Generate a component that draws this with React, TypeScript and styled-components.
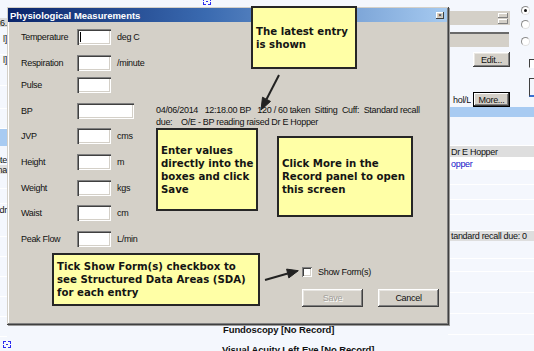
import React from "react";
import styled, { createGlobalStyle } from "styled-components";

const GlobalStyle = createGlobalStyle`
  html, body {
    margin: 0;
    padding: 0;
  }
  body {
    width: 534px;
    height: 351px;
    overflow: hidden;
    background: #f4f7fd;
    font-family: "Liberation Sans", Arial, sans-serif;
  }
`;

const ui = `
  font-family: "Liberation Sans", Arial, sans-serif;
  font-size: 9px;
  letter-spacing: -0.3px;
  color: #111;
`;

const Desktop = styled.div`
  position: relative;
  width: 534px;
  height: 351px;
  overflow: hidden;
  background: #f4f7fd;
`;

/* ---------- the application behind the dialog ---------- */

const Backdrop = styled.div`
  display: grid;
  grid-template-columns: 7px 441px 86px;
  height: 351px;
  ${ui}
`;

const Strip = styled.div`
  display: flex;
  flex-direction: column;
  overflow: hidden;
`;

const Cell = styled.div<{ $h: number; $bg?: string; $line?: boolean; $color?: string; $bold?: boolean }>`
  height: ${(p) => p.$h}px;
  flex: none;
  display: flex;
  align-items: center;
  justify-content: flex-end;
  white-space: nowrap;
  overflow: hidden;
  background: ${(p) => p.$bg || "transparent"};
  border-bottom: ${(p) => (p.$line ? "1px solid #ffffff" : "none")};
  color: ${(p) => p.$color || "#111"};
  font-weight: ${(p) => (p.$bold ? 700 : 400)};
`;

const LeftCell = styled(Cell)`
  justify-content: flex-end;
`;

const RightCell = styled(Cell)`
  justify-content: flex-start;
  padding-left: 3px;
`;

const Center = styled.div`
  display: flex;
  flex-direction: column;
  align-items: flex-start;
`;

const Record = styled.div<{ $top: number; $indent: number }>`
  margin-top: ${(p) => p.$top}px;
  margin-left: ${(p) => p.$indent}px;
  display: flex;
  align-items: flex-start;
  gap: 12px;
  font-weight: 700;
  font-size: 9.5px;
  letter-spacing: -0.1px;
  white-space: nowrap;
  line-height: 10px;
`;

const ExpandIcon = styled.svg`
  display: block;
  flex: none;
`;

const Expander: React.FC<{ className?: string }> = ({ className }) => (
  <ExpandIcon className={className} width="8" height="7" viewBox="0 0 8 7">
    <g fill="#2a2af0">
      <rect x="0" y="0" width="3" height="1" />
      <rect x="0" y="0" width="1" height="3" />
      <rect x="5" y="0" width="3" height="1" />
      <rect x="7" y="0" width="1" height="3" />
      <rect x="0" y="6" width="3" height="1" />
      <rect x="0" y="4" width="1" height="3" />
      <rect x="5" y="6" width="3" height="1" />
      <rect x="7" y="4" width="1" height="3" />
      <rect x="3" y="3" width="2" height="1" />
    </g>
  </ExpandIcon>
);

const TopIcon = styled(Expander)`
  margin: 0 0 0 196px;
  transform: translateY(-2px);
`;

const RightTop = styled.div`
  height: 112px;
  display: grid;
  grid-template-columns: 69px 17px;
`;

const RightMain = styled.div`
  display: flex;
  flex-direction: column;
  align-items: flex-start;
`;

const SpinBar = styled.div`
  margin-top: 11px;
  width: 62px;
  height: 14px;
  background: #d4d0c8;
  display: flex;
  flex-direction: column;
  align-items: flex-end;
  justify-content: center;
  gap: 1px;
  padding-right: 2px;
  box-sizing: border-box;
`;

const SpinButton = styled.div`
  width: 10px;
  height: 5px;
  background: #d4d0c8;
  box-shadow: inset -1px -1px #808080, inset 1px 1px #fff;
`;

const ComboBar = styled.div`
  margin-top: 7px;
  width: 61px;
  height: 15px;
  background: #d4d0c8;
  border-top: 2px solid #6a6a6a;
  box-sizing: border-box;
`;

const ButtonRow = styled.div<{ $top: number }>`
  margin-top: ${(p) => p.$top}px;
  display: flex;
  align-items: center;
  width: 62px;
  justify-content: flex-end;
  gap: 2px;
`;

const Button = styled.div<{ $w: number; $h: number; $default?: boolean; $disabled?: boolean }>`
  width: ${(p) => p.$w}px;
  height: ${(p) => p.$h}px;
  flex: none;
  box-sizing: border-box;
  display: flex;
  align-items: center;
  justify-content: center;
  background: #d4d0c8;
  box-shadow: ${(p) =>
    p.$default
      ? "inset 0 0 0 1px #000, inset -2px -2px #404040, inset 2px 2px #fff, inset -3px -3px #808080"
      : "inset -1px -1px #404040, inset 1px 1px #fff, inset -2px -2px #808080, inset 2px 2px #e8e6e2"};
  ${ui}
  color: ${(p) => (p.$disabled ? "#a3a09a" : "#111")};
  text-shadow: ${(p) => (p.$disabled ? "1px 1px #fff" : "none")};
`;

const ClipText = styled.div`
  width: 24px;
  overflow: hidden;
  display: flex;
  justify-content: flex-end;
  white-space: nowrap;
`;

const RightSide = styled.div`
  display: flex;
  flex-direction: column;
  align-items: flex-start;
  padding-left: 4px;
`;

const Radio = styled.div<{ $top: number; $checked?: boolean }>`
  margin-top: ${(p) => p.$top}px;
  width: 9px;
  height: 9px;
  border-radius: 50%;
  background: #fff;
  box-sizing: border-box;
  border: 1px solid #8c8c8c;
  border-right-color: #e0e0e0;
  border-bottom-color: #e0e0e0;
  display: flex;
  align-items: center;
  justify-content: center;
  &::after {
    content: "";
    width: 3px;
    height: 3px;
    border-radius: 50%;
    background: ${(p) => (p.$checked ? "#111" : "transparent")};
  }
`;

const PartialBox = styled.div<{ $top: number; $h: number; $blue?: boolean }>`
  margin-top: ${(p) => p.$top}px;
  margin-left: 8px;
  width: 10px;
  height: ${(p) => p.$h}px;
  box-sizing: border-box;
  border-left: 1px solid #404040;
  border-top: 1px solid #404040;
  border-bottom: ${(p) => (p.$blue ? "2px solid #3a6fd0" : "1px solid #fff")};
  background: ${(p) => (p.$blue ? "transparent" : "#fff")};
`;

/* ---------- the dialog ---------- */

const Dialog = styled.div`
  position: absolute;
  left: 7px;
  top: 7px;
  width: 442px;
  height: 318px;
  box-sizing: border-box;
  padding: 1px 2px 2px 1px;
  background: #d4d0c8;
  box-shadow: inset -1px -1px #404040, inset 1px 1px #d4d0c8, inset -2px -2px #808080, inset 2px 2px #fff,
    1px 1px 0 #9a9a9a;
  display: flex;
  flex-direction: column;
  ${ui}
`;

const TitleBar = styled.div`
  height: 14px;
  flex: none;
  display: flex;
  align-items: center;
  justify-content: space-between;
  padding: 0 3px 0 2px;
  background: linear-gradient(90deg, #0a246a 0%, #3a6ab0 45%, #a6caf0 100%);
  color: #fff;
  font-weight: 700;
  font-size: 9.5px;
  letter-spacing: 0;
`;

const CloseButton = styled.div`
  width: 8px;
  height: 7px;
  background: #d4d0c8;
  box-shadow: inset -1px -1px #404040, inset 1px 1px #fff;
  display: flex;
  align-items: center;
  justify-content: center;
  color: #000;
  font-size: 6px;
  line-height: 6px;
  font-weight: 400;
`;

const Body = styled.div`
  display: flex;
  flex-direction: column;
  padding: 7px 0 0 13px;
`;

const FormRow = styled.div<{ $gap: number }>`
  margin-top: ${(p) => p.$gap}px;
  height: 16px;
  display: flex;
  align-items: center;
`;

const Label = styled.div`
  width: 56px;
  flex: none;
  white-space: nowrap;
`;

const Field = styled.div<{ $w: number }>`
  position: relative;
  width: ${(p) => p.$w}px;
  height: 16px;
  flex: none;
  box-sizing: border-box;
  background: #fff;
  box-shadow: inset 1px 1px #808080, inset 2px 2px #404040, inset -1px -1px #fff, inset -2px -2px #d4d0c8;
`;

const Caret = styled.div`
  position: absolute;
  left: 3px;
  top: 3px;
  width: 1px;
  height: 10px;
  background: #000;
`;

const Unit = styled.div`
  margin-left: 6px;
  white-space: nowrap;
`;

const History = styled.div`
  align-self: flex-start;
  margin-left: 22px;
  margin-top: 1px;
  line-height: 12px;
  white-space: pre;
`;

const Footer = styled.div`
  margin-top: 19px;
  margin-left: 281px;
  display: flex;
  flex-direction: column;
  align-items: flex-start;
`;

const CheckRow = styled.div`
  display: flex;
  align-items: center;
  gap: 6px;
  height: 11px;
`;

const CheckBox = styled.div`
  width: 10px;
  height: 10px;
  box-sizing: border-box;
  background: #fff;
  box-shadow: inset 1px 1px #808080, inset -1px -1px #fff, inset 2px 2px #404040, inset -2px -2px #d4d0c8;
`;

const Buttons = styled.div`
  margin-top: 12px;
  display: flex;
  gap: 15px;
`;

/* ---------- help callouts ---------- */

const Callout = styled.div<{ $x: number; $y: number; $w: number; $h: number }>`
  position: absolute;
  left: ${(p) => p.$x}px;
  top: ${(p) => p.$y}px;
  width: ${(p) => p.$w}px;
  height: ${(p) => p.$h}px;
  box-sizing: border-box;
  border: 2px solid #262626;
  background: #ffffa6;
  display: flex;
  align-items: center;
  padding: 0 3px;
  font-family: "DejaVu Sans", Verdana, sans-serif;
  font-weight: 700;
  font-size: 10.2px;
  line-height: 13px;
  color: #141414;
  white-space: nowrap;
`;

const Arrows = styled.svg`
  position: absolute;
  left: 0;
  top: 0;
  pointer-events: none;
`;

const rows = [
  { label: "Temperature", unit: "deg C", gap: 0, caret: true },
  { label: "Respiration", unit: "/minute", gap: 10 },
  { label: "Pulse", unit: "", gap: 6 },
  { label: "BP", unit: "", gap: 10, wide: true },
  { label: "JVP", unit: "cms", gap: 9 },
  { label: "Height", unit: "m", gap: 10 },
  { label: "Weight", unit: "kgs", gap: 10 },
  { label: "Waist", unit: "cm", gap: 9 },
  { label: "Peak Flow", unit: "L/min", gap: 10 },
];

const leftCells = [
  { h: 18 },
  { h: 9, bg: "#dcdcdc", t: "26." },
  { h: 7 },
  { h: 10, t: "l]" },
  { h: 10, line: true },
  { h: 10, t: "l]" },
  { h: 20, line: true },
  { h: 22, line: true },
  { h: 19, line: true },
  { h: 17, bg: "#a8cbf2" },
  { h: 9 },
  { h: 10, t: "ote" },
  { h: 9, bg: "#e0e0e0", t: "na" },
  { h: 14, line: true },
  { h: 14, line: true },
  { h: 12, t: "dr" },
  { h: 20, line: true },
  { h: 19, line: true },
  { h: 19, line: true },
  { h: 19, line: true },
  { h: 19, line: true },
  { h: 19, line: true },
  { h: 19, line: true },
];

const rightCells = [
  { h: 10, bg: "#a8cbf2" },
  { h: 28, line: true },
  { h: 11, bg: "#dedede", t: "Dr E Hopper" },
  { h: 13, bg: "#fff", t: "opper", color: "#1414c8", indent: true },
  { h: 14, line: true },
  { h: 14, line: true },
  { h: 14, line: true },
  { h: 15, line: true },
  { h: 10, bg: "#dedede", t: "tandard recall due:   0" },
  { h: 17, line: true },
  { h: 12, line: true },
  { h: 20, line: true },
  { h: 20, line: true },
  { h: 20, line: true },
  { h: 20, line: true },
];

export default function App() {
  return (
    <Desktop>
      <GlobalStyle />
      <Backdrop>
        <Strip>
          {leftCells.map((c, i) => (
            <LeftCell key={i} $h={c.h} $bg={c.bg} $line={c.line}>
              {c.t}
            </LeftCell>
          ))}
        </Strip>
        <Center>
          <TopIcon />
          <Record $top={318} $indent={216}>
            Fundoscopy [No Record]
          </Record>
          <Record $top={6} $indent={-4}>
            <Expander />
          </Record>
          <Record $top={-3} $indent={215}>
            Visual Acuity Left Eye [No Record]
          </Record>
        </Center>
        <Strip>
          <RightTop>
            <RightMain>
              <SpinBar>
                <SpinButton />
                <SpinButton />
              </SpinBar>
              <ComboBar />
              <ButtonRow $top={5}>
                <Button $w={37} $h={15}>
                  Edit...
                </Button>
              </ButtonRow>
              <ButtonRow $top={25}>
                <ClipText>hol/L</ClipText>
                <Button $w={37} $h={15} $default>
                  More...
                </Button>
              </ButtonRow>
            </RightMain>
            <RightSide>
              <Radio $top={6} $checked />
              <Radio $top={5} />
              <Radio $top={8} />
              <PartialBox $top={13} $h={9} />
              <PartialBox $top={10} $h={19} $blue />
            </RightSide>
          </RightTop>
          {rightCells.map((c, i) => (
            <RightCell key={i} $h={c.h} $bg={c.bg} $line={c.line} $color={c.color}>
              {c.t}
            </RightCell>
          ))}
        </Strip>
      </Backdrop>

      <Dialog>
        <TitleBar>
          <span>Physiological Measurements</span>
          <CloseButton>×</CloseButton>
        </TitleBar>
        <Body>
          {rows.map((r) => (
            <FormRow key={r.label} $gap={r.gap}>
              <Label>{r.label}</Label>
              <Field $w={r.wide ? 57 : 34}>{r.caret && <Caret />}</Field>
              {r.unit && <Unit>{r.unit}</Unit>}
              {r.wide && (
                <History>
                  {"04/06/2014   12:18.00 BP   120 / 60 taken  Sitting  Cuff:  Standard recall\ndue:    O/E - BP reading raised Dr E Hopper"}
                </History>
              )}
            </FormRow>
          ))}
          <Footer>
            <CheckRow>
              <CheckBox />
              <span>Show Form(s)</span>
            </CheckRow>
            <Buttons>
              <Button $w={61} $h={18} $disabled>
                Save
              </Button>
              <Button $w={61} $h={18}>
                Cancel
              </Button>
            </Buttons>
          </Footer>
        </Body>
      </Dialog>

      <Callout $x={251} $y={6} $w={106} $h={63}>
        The latest entry
        <br />
        is shown
      </Callout>
      <Callout $x={156} $y={128} $w={102} $h={83}>
        Enter values
        <br />
        directly into the
        <br />
        boxes and click
        <br />
        Save
      </Callout>
      <Callout $x={277} $y={136} $w={136} $h={81}>
        Click More in the
        <br />
        Record panel to open
        <br />
        this screen
      </Callout>
      <Callout $x={52} $y={253} $w={208} $h={53}>
        Tick Show Form(s) checkbox to
        <br />
        see Structured Data Areas (SDA)
        <br />
        for each entry
      </Callout>

      <Arrows width="534" height="351" viewBox="0 0 534 351">
        <g stroke="#222" strokeWidth="2" fill="#222">
          <line x1="279" y1="75" x2="266.5" y2="99.3" />
          <polygon points="261,110 270.5,101.4 262.5,97.2" strokeWidth="1" />
          <line x1="265" y1="280" x2="287.7" y2="273.5" />
          <polygon points="298.3,270.7 288.8,277.9 286.6,269.1" strokeWidth="1" />
        </g>
      </Arrows>
    </Desktop>
  );
}
